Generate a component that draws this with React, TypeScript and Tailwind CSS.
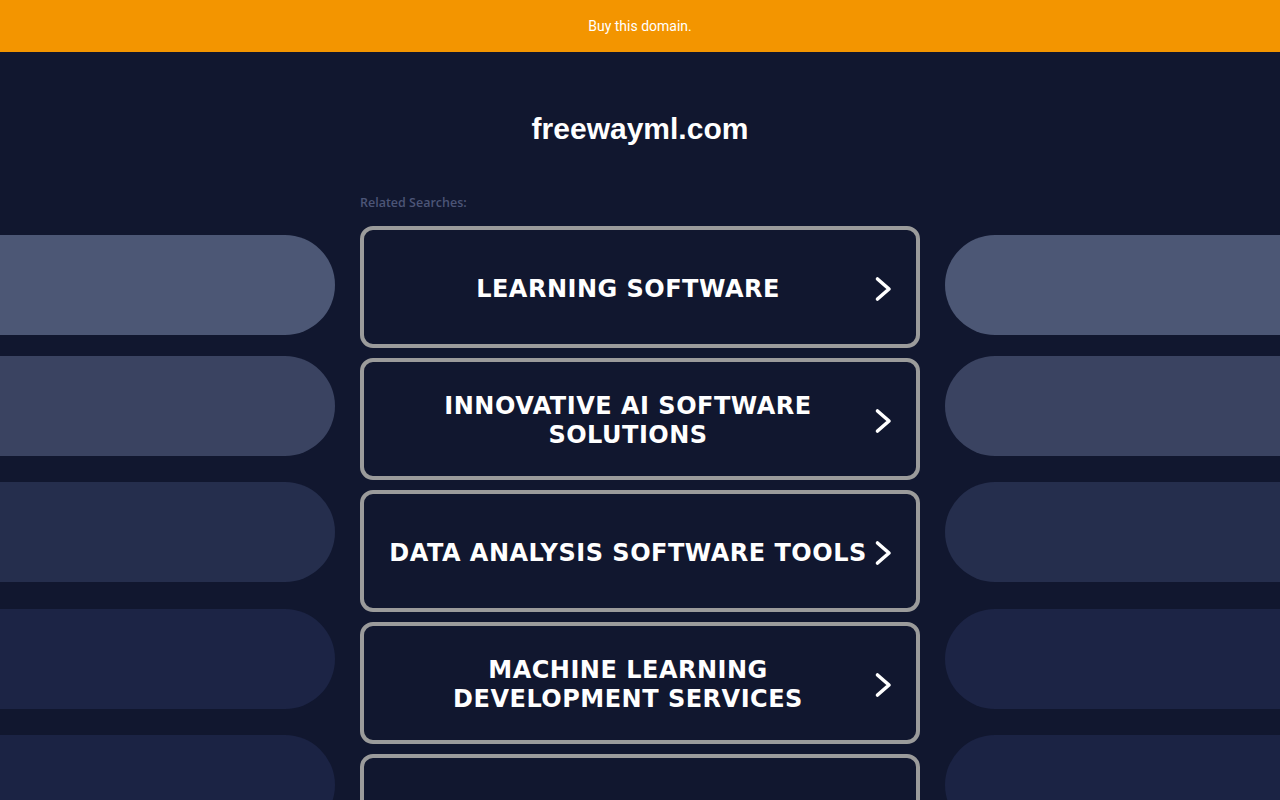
import React from "react";

const searches = [
  "LEARNING SOFTWARE",
  "INNOVATIVE AI SOFTWARE SOLUTIONS",
  "DATA ANALYSIS SOFTWARE TOOLS",
  "MACHINE LEARNING DEVELOPMENT SERVICES",
  "AI MODEL TRAINING PLATFORMS",
];

// side decoration: colour + top margin per pill
const pills = [
  { bg: "bg-[#4c5775]", mt: "mt-0" },
  { bg: "bg-[#3a4361]", mt: "mt-[21px]" },
  { bg: "bg-[#252e4d]", mt: "mt-[26px]" },
  { bg: "bg-[#1c2445]", mt: "mt-[27px]" },
  { bg: "bg-[#1b2344]", mt: "mt-[26px]" },
];

function Chevron() {
  return (
    <svg width="18" height="26" viewBox="0 0 18 26" fill="none" className="shrink-0">
      <path
        d="M3.5 3 L15 13 L3.5 23"
        stroke="#ffffff"
        strokeWidth="3.6"
        strokeLinecap="round"
        strokeLinejoin="round"
      />
    </svg>
  );
}

function SidePills({ side }: { side: "left" | "right" }) {
  return (
    <div className="flex flex-col pt-[41px]">
      {pills.map((p, i) => (
        <div
          key={i}
          className={`${p.bg} ${p.mt} h-[100px] w-full ${
            side === "left" ? "rounded-r-[50px]" : "rounded-l-[50px]"
          }`}
        />
      ))}
    </div>
  );
}

export default function App() {
  return (
    <div className="min-h-screen bg-[#11172f] overflow-hidden">
      <div className="h-[52px] bg-[#f39500] flex items-center justify-center">
        <a
          href="#"
          className="text-white text-[14px] font-['Roboto',sans-serif] leading-none"
        >
          Buy this domain.
        </a>
      </div>

      <h1 className="pt-[59px] text-center text-white text-[30px] leading-[36px] font-bold font-['Liberation_Sans',Arial,sans-serif]">
        freewayml.com
      </h1>

      <div className="mt-[47px] grid grid-cols-[1fr_560px_1fr] gap-x-[25px]">
        <SidePills side="left" />

        <div className="flex flex-col">
          <div className="h-[16px] pt-[1px] text-[12.5px] leading-[16px] font-semibold text-[#4c5577] font-['Open_Sans',sans-serif]">
            Related Searches:
          </div>
          <div className="mt-[16px] flex flex-col gap-[10px]">
            {searches.map((s) => (
              <a
                key={s}
                href="#"
                className="h-[122px] border-[4px] border-[#9b9b9b] rounded-[13px] flex items-center pl-[24px] pt-[4px]"
              >
                <span className="w-[480px] text-center text-white text-[24px] leading-[29px] tracking-[0.5px] font-bold font-['DejaVu_Sans',Verdana,sans-serif]">
                  {s}
                </span>
                <span className="ml-[6px] flex items-center">
                  <Chevron />
                </span>
              </a>
            ))}
          </div>
        </div>

        <SidePills side="right" />
      </div>
    </div>
  );
}
